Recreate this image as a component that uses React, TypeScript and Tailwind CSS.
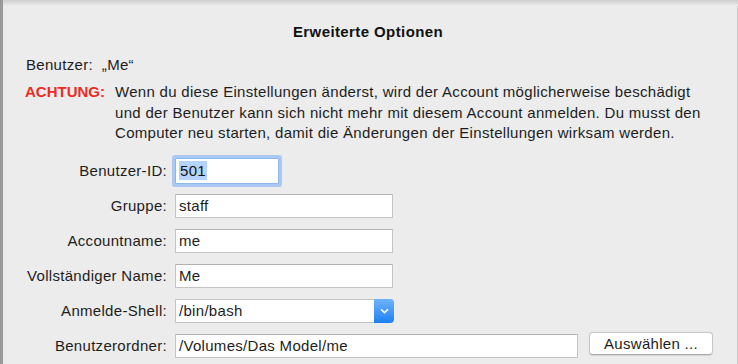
import React from "react";

const Field = ({ value, width }: { value: string; width: string }) => (
  <div className={`${width} h-[24px] bg-white border border-[#c4c4c4] border-t-[#b2b2b2] flex items-center pl-[3px] text-[15px] text-[#1d1d1d] leading-none`}>
    {value}
  </div>
);

const Row = ({ label, children }: { label: string; children: React.ReactNode }) => (
  <div className="flex items-center h-[24px]">
    <div className="w-[145px] text-right text-[15px] text-[#1d1d1d] leading-none whitespace-nowrap">{label}</div>
    <div className="ml-[8px] flex items-center">{children}</div>
  </div>
);

export default function App() {
  return (
    <div
      className="w-[738px] h-[364px] flex bg-[#ececec] overflow-hidden tracking-[0.3px]"
      style={{ fontFamily: '"Liberation Sans", Arial, sans-serif' }}
    >
      <div className="w-[3px] h-full bg-[#9a9a9a] shrink-0" />
      <div className="flex-1 flex flex-col relative">
        <div className="h-[6px] bg-gradient-to-b from-[#cfcfcf] to-[#ececec] shrink-0" />
        <div className="flex-1 flex flex-col border-r border-[#c8c8c8]">
          <div className="text-center font-bold text-[15px] tracking-[0.4px] text-[#111] mt-[18px] leading-[16px] pr-[4px]">
            Erweiterte Optionen
          </div>
          <div className="flex flex-col pl-[22px]">
            <div className="mt-[15px] text-[15px] text-[#1d1d1d] leading-[20px] pl-[1px]">
              Benutzer:&nbsp;&nbsp;„Me“
            </div>
            <div className="mt-[7px] flex text-[15px] leading-[20.5px]">
              <div className="w-[90px] shrink-0 font-bold text-[#ec2a1f] tracking-[0px]">ACHTUNG:</div>
              <div className="text-[#1d1d1d] w-[600px]">
                Wenn du diese Einstellungen änderst, wird der Account möglicherweise beschädigt und der Benutzer kann sich nicht mehr mit diesem Account anmelden. Du musst den Computer neu starten, damit die Änderungen der Einstellungen wirksam werden.
              </div>
            </div>
            <div className="mt-[15px] flex flex-col gap-[11px] -ml-[3px]">
              <Row label="Benutzer-ID:">
                <div className="w-[104px] h-[26px] bg-white border border-[#8eb7ee] ring-[3px] ring-[#a9c9f3] rounded-[1px] flex items-center pl-[3px] text-[15px] leading-none">
                  <span className="bg-[#b4d4fb] text-[#111] px-[1px] py-[2px]">501</span>
                </div>
              </Row>
              <Row label="Gruppe:">
                <Field value="staff" width="w-[218px]" />
              </Row>
              <Row label="Accountname:">
                <Field value="me" width="w-[218px]" />
              </Row>
              <Row label="Vollständiger Name:">
                <Field value="Me" width="w-[218px]" />
              </Row>
              <Row label="Anmelde-Shell:">
                <div className="w-[219px] h-[24px] bg-white border border-[#c4c4c4] flex items-center rounded-r-[4px]">
                  <div className="flex-1 pl-[3px] text-[15px] text-[#1d1d1d] leading-none">/bin/bash</div>
                  <div className="w-[20px] h-[24px] -mr-px rounded-r-[4px] bg-gradient-to-b from-[#6cb3fa] to-[#1b7ff5] flex items-center justify-center">
                    <svg width="9" height="6" viewBox="0 0 9 6">
                      <path d="M1 1.2 L4.5 4.6 L8 1.2" fill="none" stroke="white" strokeWidth="1.6" />
                    </svg>
                  </div>
                </div>
              </Row>
              <Row label="Benutzerordner:">
                <Field value="/Volumes/Das Model/me" width="w-[403px]" />
                <div className="ml-[11px] -mt-[5px] w-[124px] h-[23px] bg-white border border-[#c6c6c6] border-b-[#a9a9a9] rounded-[4px] flex items-center justify-center text-[15px] text-[#1d1d1d] leading-none shadow-[0_0.5px_1px_rgba(0,0,0,0.1)]">
                  Auswählen ...
                </div>
              </Row>
            </div>
          </div>
        </div>
      </div>
    </div>
  );
}
